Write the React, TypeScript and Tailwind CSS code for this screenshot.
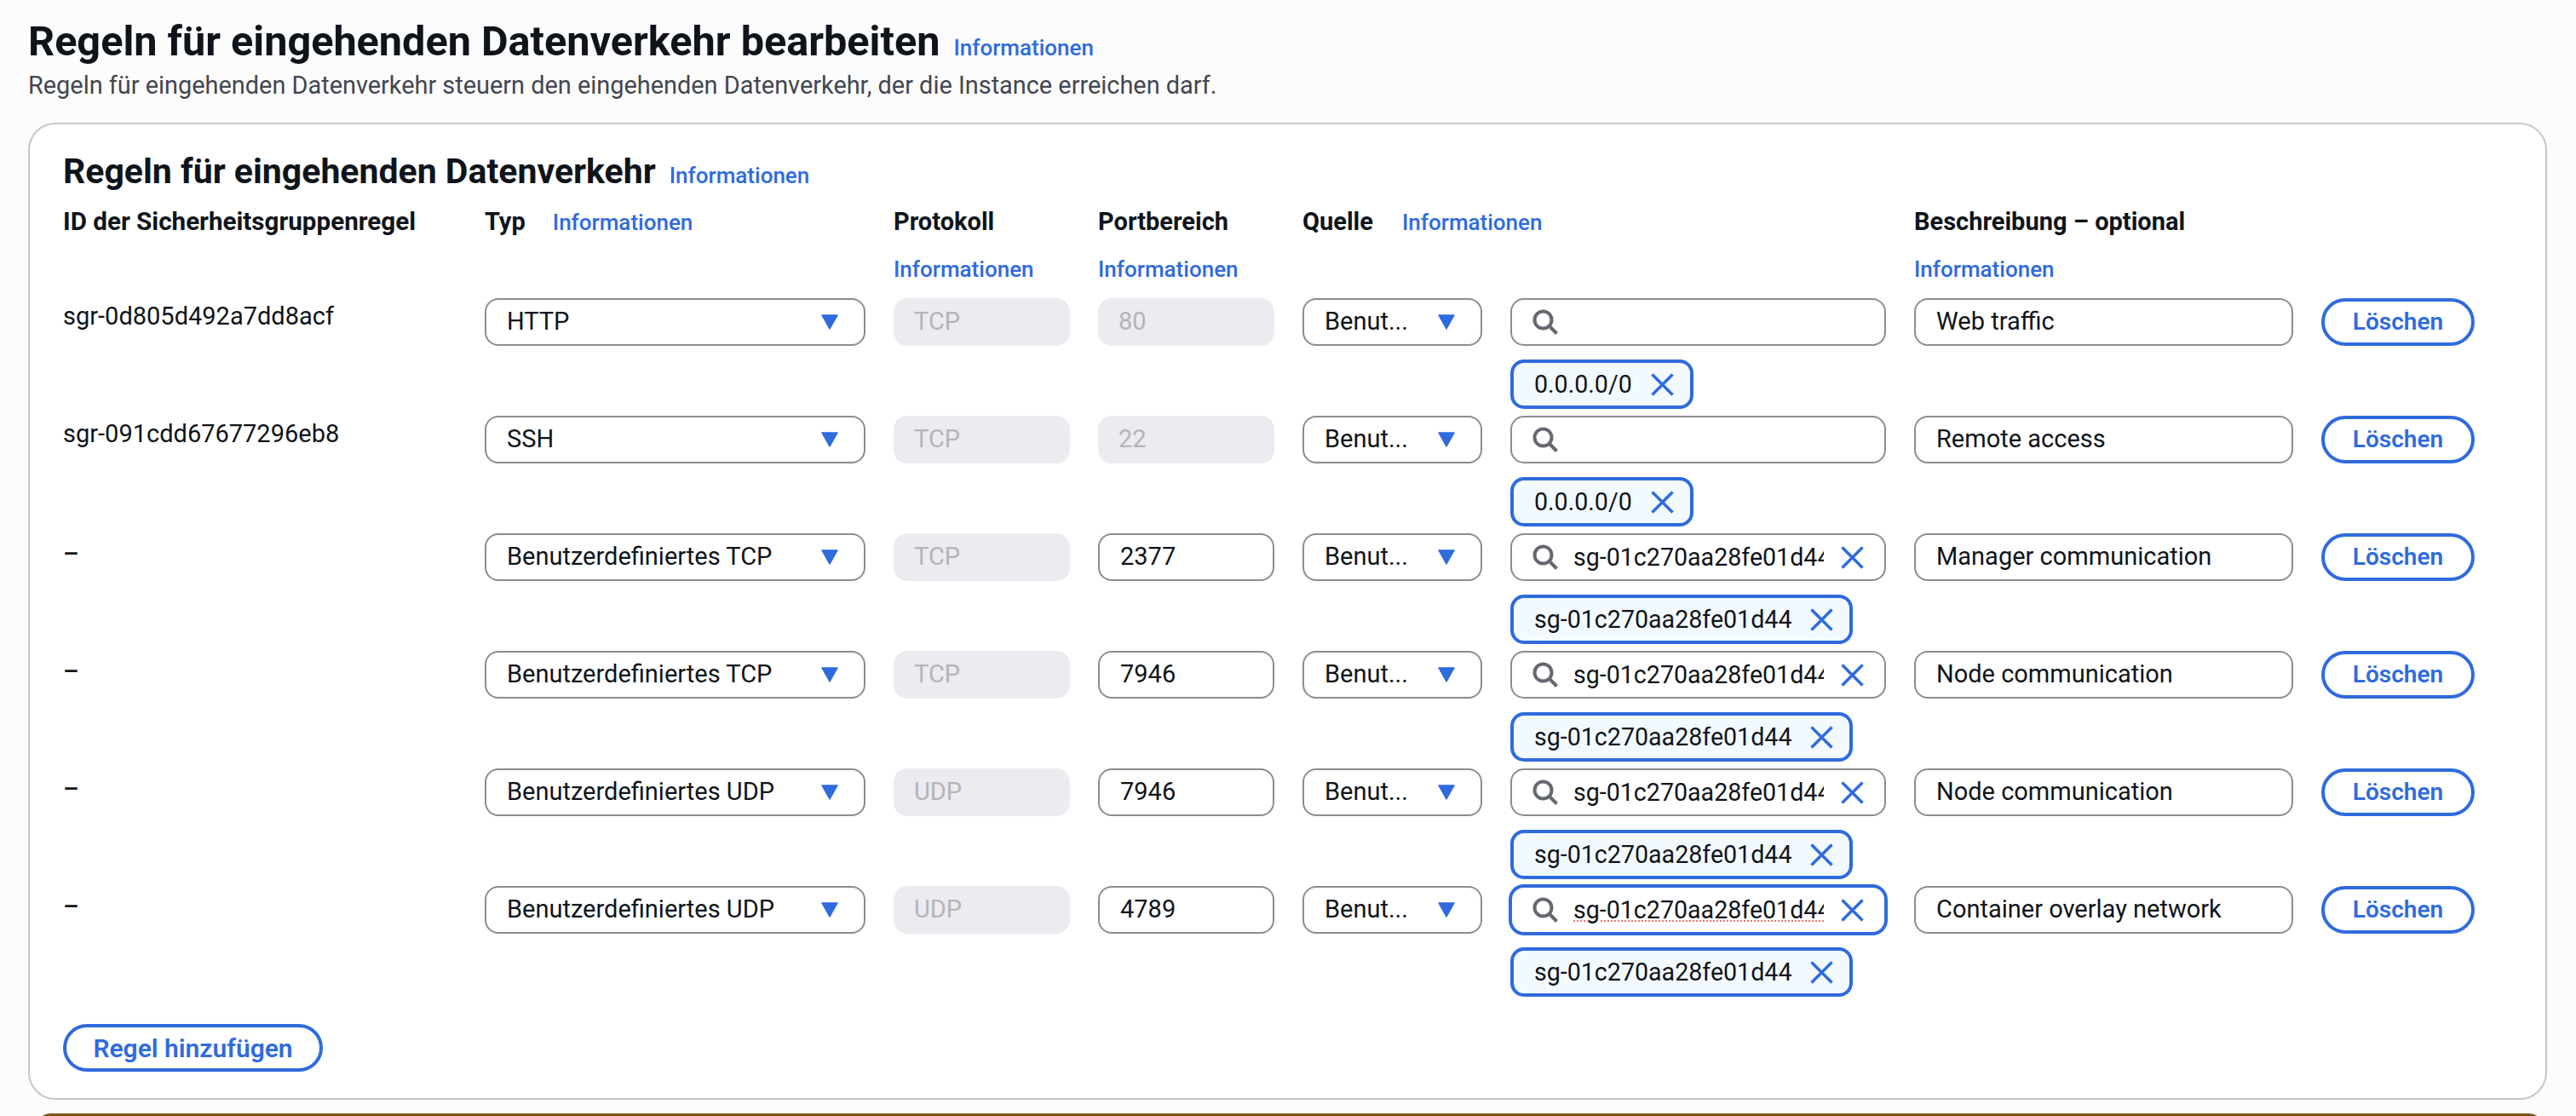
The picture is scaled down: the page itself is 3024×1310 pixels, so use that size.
const GRID =
  'grid grid-cols-[462px_447px_207px_207px_211px_441px_445px_180px] gap-x-[33px]';

const BLUE = 'text-[#2f6bdd]';

interface Rule {
  id: string;
  type: string;
  protocol: string;
  port: string;
  search: string;
  chip: string;
  description: string;
  focused?: boolean;
}

const RULES: Rule[] = [
  { id: 'sgr-0d805d492a7dd8acf', type: 'HTTP', protocol: 'TCP', port: '80', search: '', chip: '0.0.0.0/0', description: 'Web traffic' },
  { id: 'sgr-091cdd67677296eb8', type: 'SSH', protocol: 'TCP', port: '22', search: '', chip: '0.0.0.0/0', description: 'Remote access' },
  { id: '–', type: 'Benutzerdefiniertes TCP', protocol: 'TCP', port: '2377', search: 'sg-01c270aa28fe01d44', chip: 'sg-01c270aa28fe01d44', description: 'Manager communication' },
  { id: '–', type: 'Benutzerdefiniertes TCP', protocol: 'TCP', port: '7946', search: 'sg-01c270aa28fe01d44', chip: 'sg-01c270aa28fe01d44', description: 'Node communication' },
  { id: '–', type: 'Benutzerdefiniertes UDP', protocol: 'UDP', port: '7946', search: 'sg-01c270aa28fe01d44', chip: 'sg-01c270aa28fe01d44', description: 'Node communication' },
  { id: '–', type: 'Benutzerdefiniertes UDP', protocol: 'UDP', port: '4789', search: 'sg-01c270aa28fe01d44', chip: 'sg-01c270aa28fe01d44', description: 'Container overlay network', focused: true },
];

function Info({ className = '' }: { className?: string }) {
  return <a className={`text-[26px] leading-[32px] font-medium ${BLUE} ${className}`}>Informationen</a>;
}

function Caret() {
  return (
    <svg width="20" height="20" viewBox="0 0 20 20" className="shrink-0">
      <path d="M1 2h18L10 18z" fill="#2f6bdd" stroke="#2f6bdd" strokeWidth="1.5" strokeLinejoin="round" />
    </svg>
  );
}

function SearchIcon() {
  return (
    <svg width="30" height="30" viewBox="0 0 30 30" fill="none" stroke="#656871" strokeWidth="4" className="shrink-0">
      <circle cx="12.5" cy="12.5" r="10" />
      <path d="M19.5 19.5l9 9" />
    </svg>
  );
}

function CloseIcon() {
  return (
    <svg width="27" height="27" viewBox="0 0 27 27" fill="none" stroke="#2f6bdd" strokeWidth="3.5" className="shrink-0">
      <path d="M1.5 1.5l24 24M25.5 1.5l-24 24" />
    </svg>
  );
}

function Select({ value }: { value: string }) {
  return (
    <div className="h-14 flex items-center justify-between pl-6 pr-[30px] bg-white rounded-2xl border-2 border-[#8c8c94]">
      <span className="text-[29px] text-[#0f141a] whitespace-nowrap">{value}</span>
      <Caret />
    </div>
  );
}

function RuleRow({ rule }: { rule: Rule }) {
  const disabledField = 'h-14 flex items-center pl-6 rounded-2xl bg-[#ebebf0] text-[29px] text-[#b4b4bb]';
  return (
    <div className={`${GRID} mb-2`}>
      <div className={`text-[29px] leading-[36px] text-[#0f141a] ${rule.id === '–' ? 'pt-[6px] font-medium' : 'pt-[3px]'}`}>{rule.id}</div>
      <Select value={rule.type} />
      <div className={disabledField}>{rule.protocol}</div>
      {rule.port.length > 2 ? (
        <div className="h-14 flex items-center pl-6 rounded-2xl bg-white border-2 border-[#8c8c94] text-[29px] text-[#0f141a]">{rule.port}</div>
      ) : (
        <div className={disabledField}>{rule.port}</div>
      )}
      <Select value="Benut..." />
      <div className="flex flex-col items-start gap-4">
        <div
          className={
            rule.focused
              ? 'h-[60px] w-[445px] -m-[2px] flex items-center pl-6 pr-6 gap-[18px] bg-white rounded-[18px] border-[4px] border-[#2f6bdd]'
              : 'h-14 w-full flex items-center pl-6 pr-6 gap-[18px] bg-white rounded-2xl border-2 border-[#8c8c94]'
          }
        >
          <SearchIcon />
          {rule.search && (
            <>
              <span className={`flex-1 min-w-0 mr-[2px] overflow-hidden whitespace-nowrap text-[28.6px] text-[#0f141a] ${rule.focused ? 'underline decoration-dotted decoration-2 decoration-[#f0766a] underline-offset-[3px]' : ''}`}>{rule.search}</span>
              <CloseIcon />
            </>
          )}
        </div>
        <div className="h-[58px] flex items-center gap-[22px] pl-[24px] pr-[19px] rounded-2xl bg-[#f3faff] border-[4px] border-[#2f6bdd]">
          <span className="text-[28.6px] text-[#0f141a]">{rule.chip}</span>
          <CloseIcon />
        </div>
      </div>
      <div className="h-14 flex items-center pl-6 bg-white rounded-2xl border-2 border-[#8c8c94] text-[29px] text-[#0f141a]">{rule.description}</div>
      <button className={`h-14 rounded-[28px] border-[4px] border-[#2f6bdd] bg-white text-[28px] font-semibold ${BLUE}`}>Löschen</button>
    </div>
  );
}

export default function App() {
  const label = 'text-[29px] leading-[36px] font-bold text-[#0f141a]';
  return (
    <div className="h-[1310px] overflow-hidden bg-[#fcfcfd] pt-[24px] px-[33px] [font-family:Roboto,sans-serif]">
      <div className="flex items-baseline gap-4">
        <h1 className="text-[48.6px] leading-[50px] font-bold text-[#0f141a]">Regeln für eingehenden Datenverkehr bearbeiten</h1>
        <Info />
      </div>
      <p className="text-[28.9px] leading-[36px] mt-[8px] text-[#424650]">Regeln für eingehenden Datenverkehr steuern den eingehenden Datenverkehr, der die Instance erreichen darf.</p>

      <div className="mt-[26px] w-[2957px] h-[1147px] rounded-[32px] border-2 border-[#c6c6cd] bg-white pl-[39px] pt-[30px]">
        <div className="flex items-baseline gap-4">
          <h2 className="text-[41px] leading-[50px] font-bold text-[#0f141a]">Regeln für eingehenden Datenverkehr</h2>
          <Info />
        </div>
        <div className={`${GRID} mt-[16px]`}>
          <div className="text-[29.6px] leading-[36px] font-bold text-[#0f141a]">ID der Sicherheitsgruppenregel</div>
          <div className="flex items-baseline gap-8">
            <span className={label}>Typ</span>
            <Info />
          </div>
          <div>
            <div className={label}>Protokoll</div>
            <Info className="block mt-[22px]" />
          </div>
          <div>
            <div className={label}>Portbereich</div>
            <Info className="block mt-[22px]" />
          </div>
          <div className="col-span-2 flex items-baseline gap-[34px]">
            <span className={label}>Quelle</span>
            <Info />
          </div>
          <div className="col-span-2">
            <div className={label}>Beschreibung – optional</div>
            <Info className="block mt-[22px]" />
          </div>
        </div>
        <div className="mt-[18px]">
          {RULES.map((rule, i) => (
            <RuleRow key={i} rule={rule} />
          ))}
        </div>
        <button className={`mt-[24px] h-14 w-[305px] rounded-[28px] border-[4px] border-[#2f6bdd] bg-white text-[30px] font-semibold ${BLUE}`}>Regel hinzufügen</button>
      </div>
      <div className="mt-[16px] ml-[10px] mr-[6px] h-8 rounded-2xl bg-[#7a5414]" />
    </div>
  );
}
